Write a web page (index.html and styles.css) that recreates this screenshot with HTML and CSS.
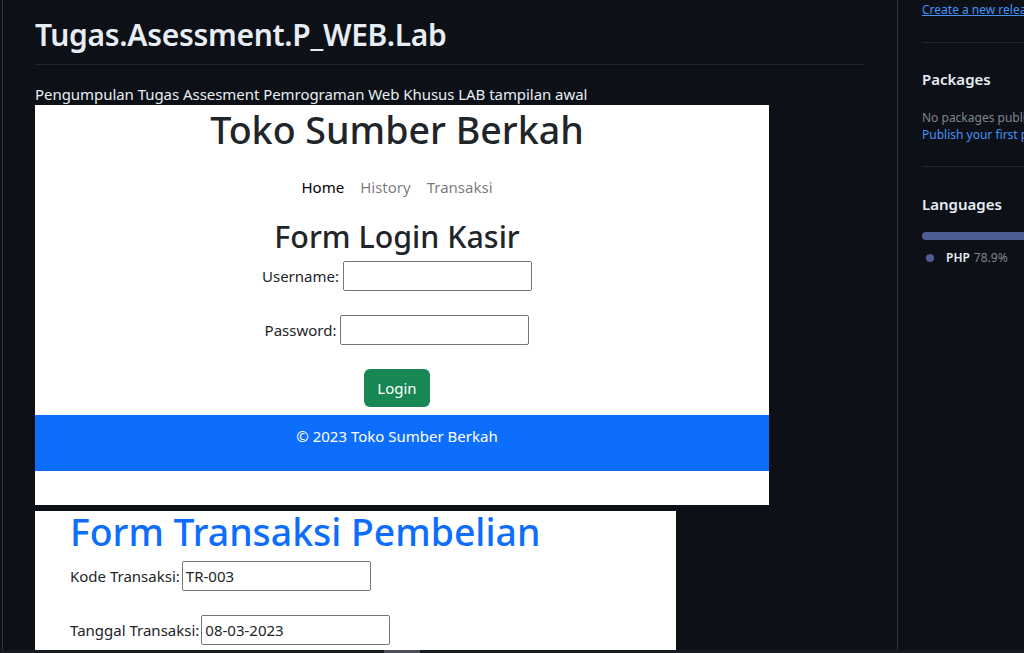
FILE: index.html
```html
<!DOCTYPE html>
<html lang="id">
<head>
<meta charset="utf-8">
<title>Tugas.Asessment.P_WEB.Lab</title>
<link rel="stylesheet" href="styles.css">
</head>
<body>
<div class="layout">
  <main class="readme">
    <h1 class="repo-title">Tugas.Asessment.P_WEB.Lab</h1>
    <p class="desc">Pengumpulan Tugas Assesment Pemrograman Web Khusus LAB tampilan awal</p>
    <div class="shot shot-login">
      <h1 class="shop-title">Toko Sumber Berkah</h1>
      <nav class="nav">
        <span class="nav-item active">Home</span>
        <span class="nav-item">History</span>
        <span class="nav-item">Transaksi</span>
      </nav>
      <h2 class="form-title">Form Login Kasir</h2>
      <div class="field"><span class="label">Username:</span><span class="input"></span></div>
      <div class="field"><span class="label">Password:</span><span class="input"></span></div>
      <div class="btn-row"><span class="btn">Login</span></div>
      <footer class="shop-footer">© 2023 Toko Sumber Berkah</footer>
    </div>
    <div class="shot shot-trans">
      <h1 class="trans-title">Form Transaksi Pembelian</h1>
      <div class="tfield"><span class="label">Kode Transaksi:</span><span class="input">TR-003</span></div>
      <div class="tfield"><span class="label">Tanggal Transaksi:</span><span class="input">08-03-2023</span></div>
    </div>
  </main>
  <aside class="sidebar">
    <a class="release-link">Create a new release</a>
    <section class="side-sec">
      <h2 class="side-h">Packages</h2>
      <p class="muted">No packages published</p>
      <a class="side-link">Publish your first package</a>
    </section>
    <section class="side-sec">
      <h2 class="side-h">Languages</h2>
      <div class="lang-bar"></div>
      <div class="lang-item"><span class="dot"></span><b>PHP</b> <span class="pct">78.9%</span></div>
    </section>
  </aside>
</div>
<div class="hscroll"><span class="thumb"></span></div>
</body>
</html>
```
FILE: styles.css
```css
html, body {
  margin: 0;
  padding: 0;
  background: #0d1117;
  height: 653px;
  overflow: hidden;
}
body {
  font-family: "Noto Sans", "Open Sans", sans-serif;
  color: #e6edf3;
}
.layout {
  display: flex;
  height: 650px;
}
.readme {
  margin-left: 2px;
  border-left: 1px solid #30363d;
  border-right: 1px solid #30363d;
  padding: 0 32px;
  box-sizing: border-box;
  width: 896px;
  flex-shrink: 0;
}
.repo-title {
  margin: 0;
  padding-top: 14px;
  font-size: 30px;
  font-weight: 600;
  line-height: 42px;
  padding-bottom: 8px;
  border-bottom: 1px solid #21262d;
  width: 830px;
  letter-spacing: -0.3px;
}
.desc {
  margin: 18px 0 0;
  font-size: 15px;
  line-height: 22px;
  height: 22px;
  letter-spacing: -0.05px;
}
.shot {
  background: #fff;
  color: #212529;
}
.shot-login {
  width: 734px;
  height: 400px;
  text-align: center;
  padding-right: 10px;
  box-sizing: border-box;
  overflow: hidden;
}
.shop-title {
  margin: 0;
  font-size: 37.6px;
  font-weight: 500;
  line-height: 50px;
}
.nav {
  display: flex;
  justify-content: center;
  gap: 16px;
  margin-top: 20px;
  font-size: 15px;
  line-height: 24px;
}
.nav-item { color: rgba(0,0,0,.55); }
.nav-item.active { color: #000; }
.form-title {
  margin: 18px 0 0;
  font-size: 30.4px;
  font-weight: 500;
  line-height: 40px;
}
.field {
  display: flex;
  justify-content: center;
  align-items: center;
  gap: 4px;
  font-size: 15px;
  height: 30px;
  margin-bottom: 24px;
}
.field:first-of-type { margin-top: 4px; }
.input {
  display: inline-block;
  width: 184px;
  height: 28px;
  border: 1px solid #767676;
  border-radius: 2px;
  background: #fff;
  text-align: left;
  font-size: 15px;
  line-height: 28px;
  padding-left: 3px;
  box-sizing: content-box;
}
.btn-row {
  display: flex;
  justify-content: center;
}
.btn {
  background: #198754;
  color: #fff;
  border-radius: 6px;
  width: 66px;
  height: 38px;
  line-height: 38px;
  font-size: 15px;
}
.shop-footer {
  background: #0d6efd;
  color: #fff;
  height: 56px;
  margin-top: 8px;
  margin-right: -10px;
  padding-right: 10px;
  font-size: 15px;
  line-height: 42px;
}
.shot-trans {
  display: flow-root;
  width: 641px;
  height: 139px;
  margin-top: 6px;
  padding-left: 35px;
  box-sizing: border-box;
}
.trans-title {
  margin: -4px 0 -4px;
  color: #0d6efd;
  font-size: 37.4px;
  font-weight: 500;
  line-height: 50px;
}
.tfield {
  display: flex;
  align-items: center;
  gap: 2px;
  font-size: 15px;
  height: 30px;
  margin-top: 8px;
  margin-bottom: 24px;
}
.sidebar {
  flex: 1;
  padding-left: 24px;
  overflow: hidden;
  white-space: nowrap;
  font-size: 12px;
}
.release-link {
  display: block;
  color: #4493f8;
  text-decoration: underline;
  line-height: 20px;
  padding-bottom: 22px;
}
.side-sec {
  border-top: 1px solid #21262d;
  padding-top: 24px;
  padding-bottom: 23px;
}
.side-h {
  margin: 0 0 18px;
  font-size: 15px;
  font-weight: 600;
  line-height: 24px;
}
.muted { margin: 0; color: #7d8590; line-height: 17px; }
.side-link { color: #4493f8; line-height: 17px; display: block; }
.side-sec + .side-sec { padding-top: 25px; }
.side-sec + .side-sec .side-h { margin-bottom: 16px; }
.lang-bar {
  height: 8px;
  border-radius: 4px 0 0 4px;
  background: #4f5d95;
  margin-bottom: 9px;
}
.lang-item { display: flex; align-items: center; gap: 4px; font-size: 12px; }
.lang-item b { color: #e6edf3; font-weight: 600; margin-left: 8px; }
.dot { width: 8px; height: 8px; border-radius: 50%; background: #4f5d95; margin-left: 4px; }
.pct { color: #7d8590; }
.hscroll {
  height: 3px;
  background: #161b22;
  position: relative;
}
.thumb {
  position: absolute;
  left: 384px;
  width: 36px;
  top: 0;
  height: 3px;
  background: #484f58;
}
```
